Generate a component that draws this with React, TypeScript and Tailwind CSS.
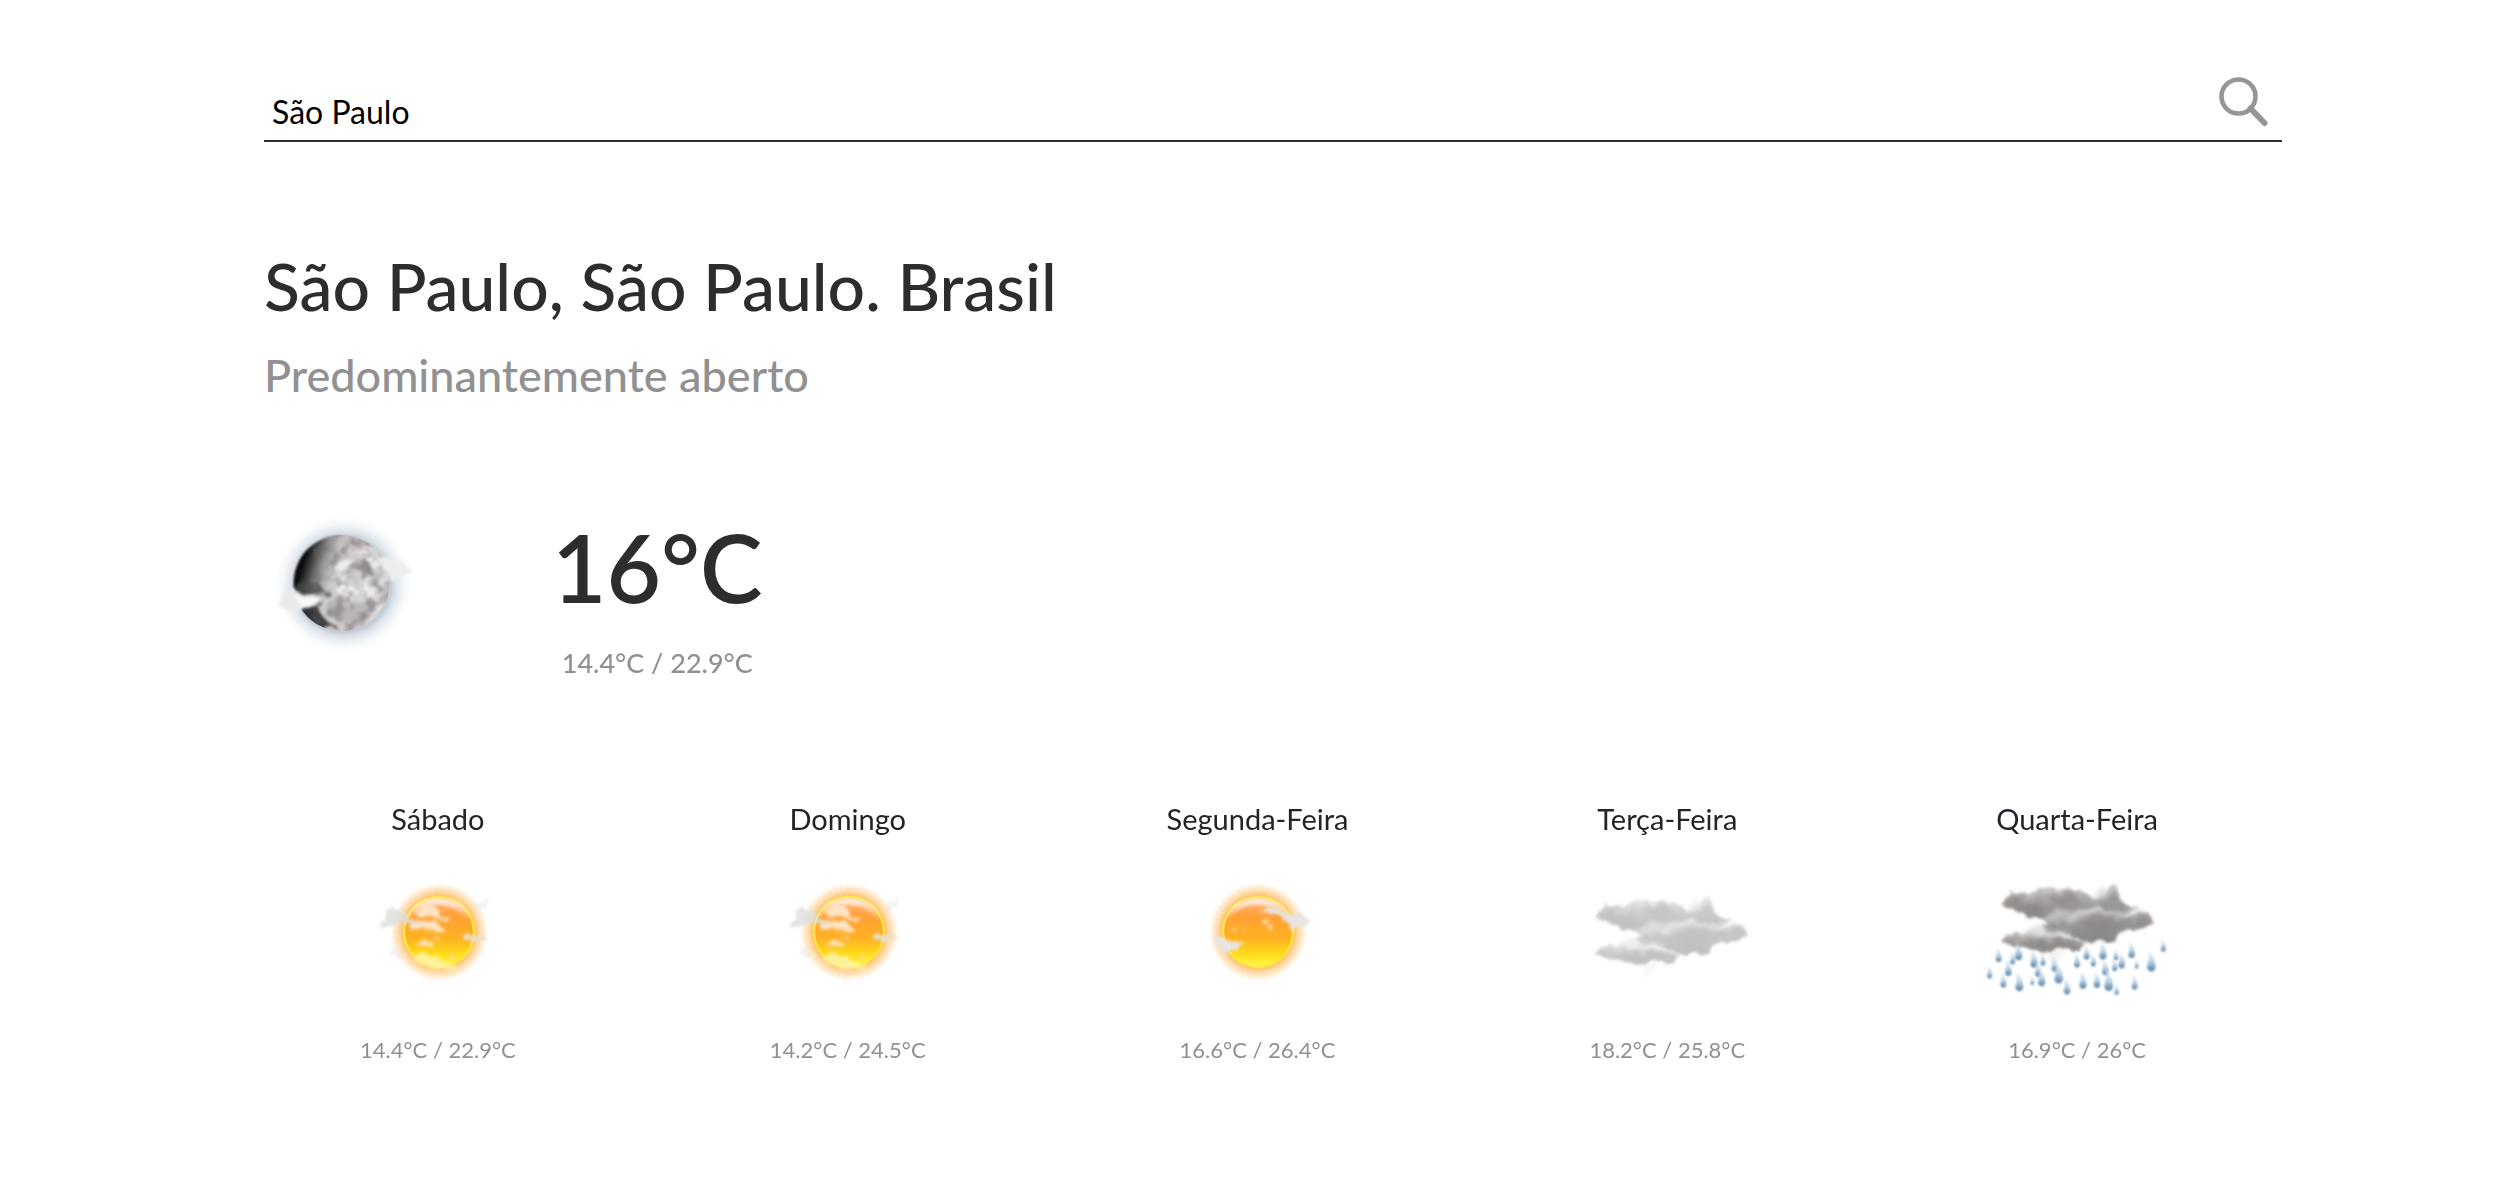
import { useState } from 'react';

const soft = (id: string, amount: number) => (
  <filter id={id} x="-50%" y="-50%" width="200%" height="200%">
    <feGaussianBlur stdDeviation={amount} />
  </filter>
);

/* Ragged, wispy edges for vapour shapes. */
const wispy = (id: string, scale: number, blur: number, frequency = 0.035) => (
  <filter id={id} x="-30%" y="-30%" width="160%" height="160%" colorInterpolationFilters="sRGB">
    <feTurbulence type="fractalNoise" baseFrequency={frequency} numOctaves={3} seed={4} result="noise" />
    <feDisplacementMap in="SourceGraphic" in2="noise" scale={scale} xChannelSelector="R" yChannelSelector="G" />
    <feGaussianBlur stdDeviation={blur} />
  </filter>
);

function SearchIcon() {
  return (
    <svg width="50" height="50" viewBox="0 0 50 50" fill="none" stroke="#959595" aria-hidden="true">
      <circle cx="19.5" cy="19.5" r="17" strokeWidth="4.6" />
      <path d="M31.500 31.500L45.500 46" strokeWidth="6" strokeLinecap="round" />
    </svg>
  );
}

function MoonIcon() {
  return (
    <svg width="166" height="160" viewBox="12 0 498 480" role="img" aria-label="Predominantemente aberto">
      <defs>
        <radialGradient id="moonHalo" cx="250" cy="256" r="212" gradientUnits="userSpaceOnUse">
          <stop offset="0.66" stopColor="#b4c2ce" stopOpacity="0.95" />
          <stop offset="0.74" stopColor="#d0d8e0" stopOpacity="0.75" />
          <stop offset="0.86" stopColor="#e9edf0" stopOpacity="0.5" />
          <stop offset="1" stopColor="#fff" stopOpacity="0" />
        </radialGradient>
        <linearGradient id="moonFace" x1="112" y1="205" x2="390" y2="290" gradientUnits="userSpaceOnUse">
          <stop offset="0.04" stopColor="#0a0a0c" />
          <stop offset="0.13" stopColor="#444446" />
          <stop offset="0.24" stopColor="#949294" />
          <stop offset="0.38" stopColor="#d0cccd" />
          <stop offset="0.8" stopColor="#dad6d6" />
          <stop offset="1" stopColor="#dcdee1" />
        </linearGradient>
        <clipPath id="moonDisc"><circle cx="245" cy="252" r="144" /></clipPath>
        {soft('moonSoft3', 3)}
        {wispy('moonRough', 50, 5, 0.025)}
        {wispy('moonWisp', 14, 4)}
        <filter id="moonDust" x="0" y="0" width="100%" height="100%" colorInterpolationFilters="sRGB">
          <feTurbulence type="fractalNoise" baseFrequency="0.028" numOctaves={3} seed={11} />
          <feColorMatrix values="0 0 0 0 0.42  0 0 0 0 0.4  0 0 0 0 0.41  3.6 0 0 0 -1.6" />
          <feGaussianBlur stdDeviation="3" />
        </filter>
      </defs>
      <circle cx="250" cy="256" r="212" fill="url(#moonHalo)" />
      <circle cx="245" cy="252" r="144" fill="url(#moonFace)" filter="url(#moonSoft3)" />
      <g clipPath="url(#moonDisc)">
        <g filter="url(#moonRough)">
          <path d="M90 300Q150 290 180 330Q190 370 225 400L110 380Z" fill="#1c1c1e" opacity="0.8" />
          <path d="M105 275Q130 235 165 255Q190 245 205 290L150 290Z" fill="#4a494b" opacity="0.75" />
          <path d="M200 310Q240 285 290 310Q350 280 350 330Q340 380 270 385Q200 370 200 310Z" fill="#bcb7b8" />
          <path d="M290 185Q320 165 345 200Q345 240 315 235Q280 220 290 185Z" fill="#938e8f" />
          <path d="M350 210Q370 250 350 290Q335 260 350 210Z" fill="#b9b4b5" />
          <path d="M230 115Q300 110 335 155Q270 145 240 175Z" fill="#c5bcbb" />
        </g>
        <g fill="#efedee" filter="url(#moonRough)">
          <path d="M220 205Q250 165 275 195Q275 235 225 250Z" />
          <path d="M235 255Q270 240 300 280L275 305Q250 275 225 285Z" />
          <path d="M290 155Q335 150 365 200Q345 195 335 180Q320 170 290 155Z" />
          <path d="M315 245Q350 235 355 280Q325 305 305 275Z" />
        </g>
        <rect x="160" y="105" width="230" height="295" filter="url(#moonDust)" opacity="0.45" />
      </g>
      <g filter="url(#moonWisp)">
        <path d="M56 318L66 284L102 266L122 284L162 290L188 296L164 320L132 330L112 340L84 332Z" fill="#e9ebeb" />
        <path d="M106 286L141 296L184 298L156 318L126 326Z" fill="#f9f9f9" />
        <path d="M352 172L390 176L412 184L436 194L458 212L442 228L418 232L400 246L384 222L360 196Z" fill="#eceeee" />
      </g>
    </svg>
  );
}

type SunKind = 'cloudy' | 'clear';

function SunIcon({ kind, id, label }: { kind: SunKind; id: string; label: string }) {
  return (
    <svg width="200" height="150" viewBox="-303 -222 600 450" role="img" aria-label={label}>
      <defs>
        <radialGradient id={id + 'halo'} cx="0" cy="0" r="150" gradientUnits="userSpaceOnUse">
          <stop offset="0.68" stopColor="#ffb23c" />
          <stop offset="0.76" stopColor="#ffc678" stopOpacity="0.9" />
          <stop offset="0.87" stopColor="#ffdfb2" stopOpacity="0.6" />
          <stop offset="1" stopColor="#fff" stopOpacity="0" />
        </radialGradient>
        <linearGradient id={id + 'face'} x1="0" y1="-105" x2="0" y2="105" gradientUnits="userSpaceOnUse">
          <stop offset="0" stopColor="#ffb684" />
          <stop offset="0.28" stopColor="#ffa035" />
          <stop offset="0.6" stopColor="#ffb222" />
          <stop offset="0.82" stopColor="#ffdc1c" />
          <stop offset="1" stopColor="#fff94a" />
        </linearGradient>
        <linearGradient id={id + 'gloss'} x1="0" y1="-104" x2="0" y2="-30" gradientUnits="userSpaceOnUse">
          <stop offset="0" stopColor="#fff" stopOpacity="0.85" />
          <stop offset="1" stopColor="#fff" stopOpacity="0" />
        </linearGradient>
        {soft(id + 's2', 2)}
        {soft(id + 's4', 4)}
        {wispy(id + 'w', 26, 4)}
      </defs>
      <circle r="150" fill={`url(#${id}halo)`} />
      <circle r="132" fill="none" stroke="#ffc878" strokeWidth="20" strokeDasharray="7 11" opacity="0.35" filter={`url(#${id}s4)`} />
      <circle r="105" fill={`url(#${id}face)`} stroke="#ffe548" strokeWidth="7" filter={`url(#${id}s2)`} />
      <path d="M-98 -20Q-92 -98 0 -101Q92 -98 98 -20Q58 -84 -10 -80Q-70 -76 -98 -20Z" fill={`url(#${id}gloss)`} filter={`url(#${id}s4)`} />
      {kind === 'cloudy' ? (
        <g filter={`url(#${id}w)`}>
          <g fill="#dcdedf">
            <path d="M-182 -26L-156 -36L-160 -60L-144 -78L-124 -64L-104 -66L-88 -42L-96 -18L-122 -28L-144 -18L-174 -10Z" opacity="0.8" />
            <path d="M96 -80L130 -88L154 -104L146 -74L118 -68Z" opacity="0.35" />
            <path d="M-148 58L-132 48L-112 64L-116 80L-138 74Z" opacity="0.35" />
          </g>
          <g fill="#ffe4c4">
            <path d="M-70 -64L-38 -84L-14 -76L2 -60L2 -54L34 -44L30 -34L0 -42L-24 -50L-60 -46Z" />
            <path d="M-88 -24L-50 -36L-10 -30L10 -14L26 -2L-4 2L-50 -8L-84 -2Z" />
            <path d="M-66 34L-44 22L-18 40L-26 50L-50 46ZM-30 18L0 14L6 24Z" />
          </g>
          <path d="M24 74L48 52L42 76Z" fill="#ffd98a" />
          <path d="M62 14L80 4L104 8L140 12L144 24L114 28L92 20L68 24Z" fill="#e9dfc9" />
          <path d="M-82 76L-50 62L-10 70L10 94L56 100L36 114L-30 108L-64 94Z" fill="#fff2a6" opacity="0.9" />
          <path d="M-100 -42L-62 -40L-48 -28L-86 -18Z" fill="#e6dccd" />
        </g>
      ) : (
        <g filter={`url(#${id}w)`}>
          <path d="M2 -60L24 -68L38 -78L70 -68L86 -54L120 -56L142 -46L162 -30L146 -14L118 -16L100 -4L86 -30L64 -50L36 -58Z" fill="#e8e4de" />
          <path d="M10 -38l20 -6l4 14l-16 4ZM26 -22l18 8l-6 14Z" fill="#ffd9a3" />
          <path d="M-138 12L-110 14L-90 26L-44 30L-70 56L-102 60L-126 46L-134 28Z" fill="#e8e6e1" />
          <path d="M-82 -4l18 -6l-4 14ZM-54 -10l14 0l-8 8Z" fill="#ffd48e" />
        </g>
      )}
    </svg>
  );
}

function CloudShapes({ id, dark }: { id: string; dark: boolean }) {
  const base = dark ? '#9d9a98' : '#c9c9c8';
  const light = dark ? '#d2d0cf' : '#e8e8e7';
  const shade = dark ? '#868381' : '#bebebd';
  return (
    <>
      <defs>
        <linearGradient id={id + 'g'} x1="0" y1="0" x2="0" y2="1">
          <stop offset="0" stopColor={light} />
          <stop offset="0.45" stopColor={base} />
          <stop offset="1" stopColor={shade} />
        </linearGradient>
        {wispy(id + 'edge', 30, 4, 0.03)}
        {wispy(id + 'mist', 36, 7, 0.03)}
      </defs>
      <path d="M210 190L300 160L400 170L490 190L400 200L300 240L350 280L280 262L230 244L250 220Z" fill={light} filter={`url(#${id}mist)`} />
      <g filter={`url(#${id}edge)`}>
        <path d="M106 178L122 152L134 132L152 146L200 140L232 128L276 124L316 130L372 150L400 150L426 132L446 122L462 148L470 172L506 190L480 202L400 194L330 200L290 220L250 238L226 212L180 208L150 190Z" fill={`url(#${id}g)`} />
        <path d="M230 244L288 222L328 200L400 182L440 196L500 208L524 204L546 194L564 240L530 248L462 262L444 288L380 290L340 280L290 262L246 258Z" fill={`url(#${id}g)`} />
        <path d="M100 290L112 264L142 270L190 260L250 266L300 274L366 290L344 312L318 320L290 310L236 318L200 314L146 300Z" fill={`url(#${id}g)`} />
      </g>
      <g filter={`url(#${id}mist)`} fill={light} opacity="0.7">
        <path d="M376 140L420 124L418 160L386 158Z" />
        <path d="M228 208L282 190L320 200L270 228L240 236Z" />
        <path d="M470 190L520 190L510 212L474 208Z" />
        <path d="M170 262L220 244L320 260L290 274Z" />
        <path d="M290 218L340 190L410 180L380 204L310 224Z" />
      </g>
      <g filter={`url(#${id}mist)`} fill={shade} opacity="0.6">
        <path d="M120 166L140 150L190 180L232 206L190 206ZM230 152L300 136L352 166L280 180Z" />
        <path d="M330 232L400 204L450 222L520 220L450 250L390 270Z" />
        <path d="M106 276l26 2l-2 14l-22 -2ZM180 290L300 288L330 300L230 308ZM514 218l34 -14l4 26l-32 8ZM428 136l26 4l4 28l-30 0Z" />
      </g>
      <path d="M232 316L300 322L266 350Z" fill={light} opacity="0.3" filter={`url(#${id}mist)`} />
    </>
  );
}

function CloudIcon() {
  return (
    <svg width="200" height="150" viewBox="21 0 600 450" role="img" aria-label="Nublado">
      <CloudShapes id="cloud" dark={false} />
    </svg>
  );
}

const drops = [
  [116, 304, 9], [89, 354, 8], [176, 296, 11], [158, 312, 8], [145, 344, 10], [130, 380, 9], [178, 388, 12],
  [222, 318, 11], [249, 316, 8], [234, 348, 9], [217, 376, 6], [245, 374, 11], [283, 332, 9], [296, 364, 13],
  [321, 400, 10], [351, 320, 9], [369, 382, 11], [380, 296, 9], [400, 318, 8], [411, 380, 10], [429, 294, 11],
  [436, 342, 10], [446, 386, 13], [464, 332, 8], [468, 300, 7], [485, 322, 10], [515, 290, 10], [530, 326, 6],
  [524, 386, 9], [574, 328, 13], [610, 274, 8], [470, 404, 7],
];

function RainIcon() {
  return (
    <svg width="200" height="150" viewBox="51 0 600 450" role="img" aria-label="Chuva">
      <defs>
        <linearGradient id="drop" x1="0" y1="0" x2="0" y2="1">
          <stop offset="0" stopColor="#dbe9f4" stopOpacity="0.5" />
          <stop offset="0.55" stopColor="#b9d1e3" />
          <stop offset="0.8" stopColor="#7b9fbd" />
          <stop offset="1" stopColor="#6189a8" />
        </linearGradient>
        {soft('dropSoft', 3)}
      </defs>
      <g transform="translate(18 -37)">
        <CloudShapes id="rain" dark />
      </g>
      <g filter="url(#dropSoft)">
        {drops.map(([x, y, r]) => (
          <path
            key={`${x}-${y}`}
            d={`M${x - r * 0.6} ${y - r * 4}Q${x + r} ${y - r * 2} ${x + r} ${y}Q${x + r * 0.8} ${y + r} ${x} ${y + r}Q${x - r} ${y + r * 0.8} ${x - r} ${y}Q${x - r * 0.5} ${y - r * 2} ${x - r * 0.6} ${y - r * 4}Z`}
            fill="url(#drop)"
          />
        ))}
      </g>
    </svg>
  );
}

const days = [
  { name: 'Sábado', temps: '14.4°C / 22.9°C', icon: <SunIcon kind="cloudy" id="sat" label="Sol entre nuvens" /> },
  { name: 'Domingo', temps: '14.2°C / 24.5°C', icon: <SunIcon kind="cloudy" id="sun" label="Sol entre nuvens" /> },
  { name: 'Segunda-Feira', temps: '16.6°C / 26.4°C', icon: <SunIcon kind="clear" id="mon" label="Sol" /> },
  { name: 'Terça-Feira', temps: '18.2°C / 25.8°C', icon: <CloudIcon /> },
  { name: 'Quarta-Feira', temps: '16.9°C / 26°C', icon: <RainIcon /> },
];

export default function App() {
  const [city, setCity] = useState('São Paulo');
  return (
    <main className="min-h-screen bg-white px-[233px] pt-[70px] pb-16 font-['Lato',sans-serif] text-[#2d2d2d]">
      <div className="pl-[31px]">
        <form className="flex h-[72px] items-start border-b-2 border-[#2d2d2d]" onSubmit={(e) => e.preventDefault()}>
          <input
            aria-label="Cidade"
            value={city}
            onChange={(e) => setCity(e.target.value)}
            className="mt-5 h-11 min-w-0 flex-1 px-2 text-[32px] text-black outline-none"
          />
          <button type="submit" aria-label="Buscar" className="mt-[7px] mr-[13px]">
            <SearchIcon />
          </button>
        </form>
        <h1 className="mt-[104px] text-[66px] leading-[80px] font-medium">São Paulo, São Paulo. Brasil</h1>
        <h2 className="mt-[21px] text-[45px] leading-[56px] font-medium text-[#919191]">Predominantemente aberto</h2>
        <section className="mt-24 flex items-start">
          <MoonIcon />
          <div className="ml-[122px] flex flex-col items-center">
            <p className="mt-2 text-[94px] leading-[120px] font-semibold">16°C</p>
            <p className="mt-[18px] text-[27px] leading-9 font-medium text-[#919191]">14.4°C / 22.9°C</p>
          </div>
        </section>
      </div>
      <section className="mt-[120px] grid grid-cols-5">
        {days.map((day) => (
          <article key={day.name} className="flex flex-col items-center">
            <h3 className="text-[29px] leading-9 text-[#212529]">{day.name}</h3>
            <div className="mt-[21px]">{day.icon}</div>
            <p className="mt-[26px] text-[22px] leading-8 text-[#919191]">{day.temps}</p>
          </article>
        ))}
      </section>
    </main>
  );
}
